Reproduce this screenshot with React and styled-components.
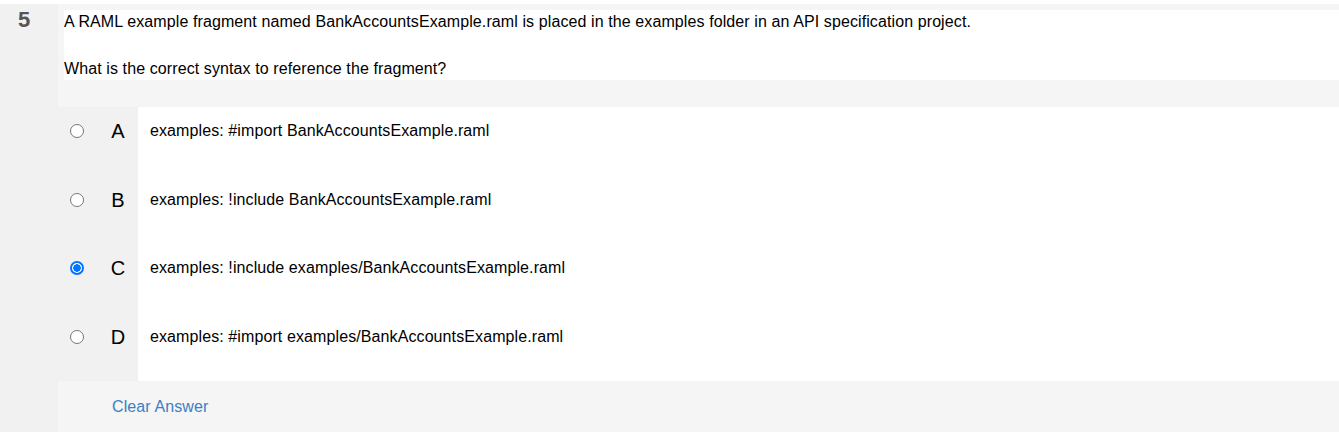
import styled, { createGlobalStyle } from "styled-components";

const GlobalStyle = createGlobalStyle`
  html, body {
    margin: 0;
    padding: 0;
    background: #fff;
  }
  body {
    font-family: "Liberation Sans", Arial, sans-serif;
    color: #000;
    letter-spacing: 0.1px;
  }
`;

const options = [
  { key: "A", text: "examples: #import BankAccountsExample.raml" },
  { key: "B", text: "examples: !include BankAccountsExample.raml" },
  { key: "C", text: "examples: !include examples/BankAccountsExample.raml" },
  { key: "D", text: "examples: #import examples/BankAccountsExample.raml" },
];

export default function App() {
  const selected = "C";
  return (
    <>
      <GlobalStyle />
      <Card>
        <NumberCol>5</NumberCol>
        <Body>
          <Header>
            <Question>
              <p>
                A RAML example fragment named BankAccountsExample.raml is placed
                in the examples folder in an API specification project.
              </p>
              <p className="second">
                What is the correct syntax to reference the fragment?
              </p>
            </Question>
          </Header>
          <OptionList>
            {options.map((o) => (
              <OptionRow key={o.key}>
                <Marker>
                  <Cell>
                    <Radio
                      type="radio"
                      name="q5"
                      defaultChecked={o.key === selected}
                    />
                  </Cell>
                  <Cell>
                    <Letter>{o.key}</Letter>
                  </Cell>
                </Marker>
                <OptionText>{o.text}</OptionText>
              </OptionRow>
            ))}
          </OptionList>
          <Footer>
            <ClearLink>Clear Answer</ClearLink>
          </Footer>
        </Body>
      </Card>
    </>
  );
}

const Card = styled.div`
  display: flex;
  margin-top: 4px;
  height: 428px;
  width: 1339px;
`;

const NumberCol = styled.div`
  width: 58px;
  flex-shrink: 0;
  background: #f1f1f1;
  box-sizing: border-box;
  padding: 3px 0 0 18px;
  font-size: 22px;
  line-height: 25px;
  font-weight: bold;
  color: #555;
`;

const Body = styled.div`
  flex: 1;
  display: flex;
  flex-direction: column;
`;

const Header = styled.div`
  background: #f5f5f5;
  padding: 6px 0 27px 6px;
`;

const Question = styled.div`
  background: #fff;
  padding: 3px 0 2px;
  font-size: 16px;
  line-height: 18px;

  p {
    margin: 0;
  }

  .second {
    margin-top: 29px;
  }
`;

const OptionList = styled.div`
  display: flex;
  flex-direction: column;
`;

const OptionRow = styled.div`
  display: flex;
  height: 68.5px;
`;

const Marker = styled.div`
  display: flex;
  width: 80px;
  flex-shrink: 0;
  background: #f1f1f1;
  box-sizing: border-box;
  padding-top: 14px;
`;

const Cell = styled.div`
  width: 40px;
  height: 20px;
  display: flex;
  align-items: center;
  justify-content: center;
`;

const Radio = styled.input`
  appearance: none;
  margin: 0 0 0 -2px;
  width: 14px;
  height: 14px;
  box-sizing: border-box;
  border-radius: 50%;
  border: 1px solid #767676;
  background: #fff;

  &:checked {
    border: 2px solid #0075ff;
    background: radial-gradient(circle, #0075ff 0 3.5px, #fff 4px);
  }
`;

const Letter = styled.span`
  font-size: 20px;
  line-height: 20px;
  color: #000;
`;

const OptionText = styled.div`
  flex: 1;
  background: #fff;
  padding: 14px 0 0 12px;
  font-size: 16px;
  line-height: 20px;
`;

const Footer = styled.div`
  background: #f5f5f5;
  height: 51px;
  display: flex;
  align-items: center;
  padding-left: 54px;
`;

const ClearLink = styled.a`
  font-size: 16px;
  color: #3d7ec4;
  cursor: pointer;
`;
